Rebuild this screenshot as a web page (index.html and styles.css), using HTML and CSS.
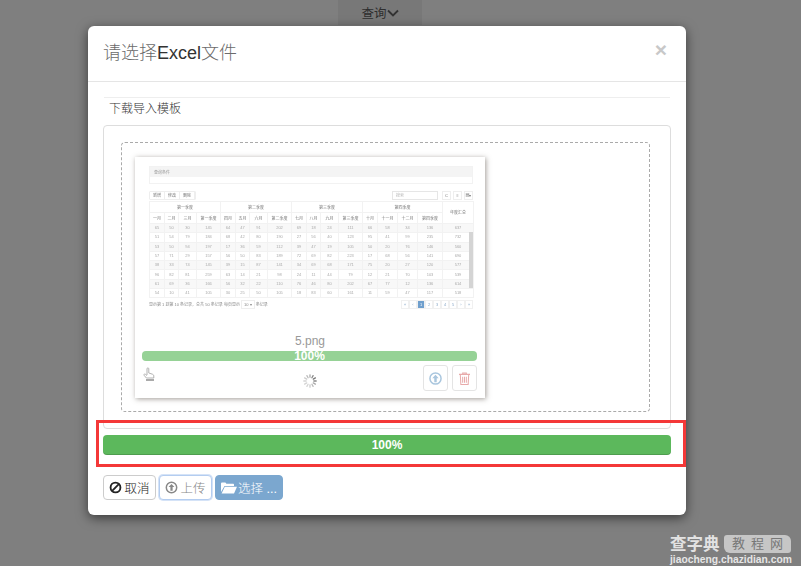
FILE: index.html
```html
<!DOCTYPE html>
<html lang="zh">
<head>
<meta charset="utf-8">
<title>请选择Excel文件</title>
<link rel="stylesheet" href="styles.css">
</head>
<body>
<div class="topbar">
  <div class="query">查询<svg class="chev" viewBox="0 0 12 8" width="12" height="8"><path d="M1 1.5l5 5 5-5" fill="none" stroke="#333" stroke-width="1.8"/></svg></div>
</div>
<div class="modal">
  <header class="modal-head">
    <h4 class="modal-title"><span class="cjk">请选择</span>Excel<span class="cjk">文件</span></h4>
    <span class="close">×</span>
  </header>
  <div class="modal-body">
    <div class="template-row">下载导入模板</div>
    <div class="panel">
      <div class="drop">
        <div class="thumb">
          <div class="shot">
            <div class="cond"><div class="cond-head">查询条件</div></div>
            <div class="toolbar">
              <div class="tool-group"><span>新增</span><span>修改</span><span>删除</span></div>
              <div class="tool-right"><span class="search">搜索</span><span class="tb">C</span><span class="tb">≡</span><span class="tb">▦▾</span></div>
            </div>
            <table class="grid">
              <colgroup><col class="c1"><col class="c2"><col class="c3"><col class="c4"><col class="c1"><col class="c2"><col class="c3"><col class="c4"><col class="c1"><col class="c2"><col class="c3"><col class="c4"><col class="c5"><col class="c6"><col class="c6"><col class="c7"><col class="c8"></colgroup>
              <thead>
                <tr><th colspan="4">第一季度</th><th colspan="4">第二季度</th><th colspan="4">第三季度</th><th colspan="4">第四季度</th><th rowspan="2">年度汇总</th></tr>
                <tr><th>一月</th><th>二月</th><th>三月</th><th>第一季度</th><th>四月</th><th>五月</th><th>六月</th><th>第二季度</th><th>七月</th><th>八月</th><th>九月</th><th>第三季度</th><th>十月</th><th>十一月</th><th>十二月</th><th>第四季度</th></tr>
              </thead>
              <tbody>
                <tr><td>65</td><td>50</td><td>30</td><td>145</td><td>64</td><td>47</td><td>91</td><td>202</td><td>69</td><td>18</td><td>24</td><td>111</td><td>66</td><td>58</td><td>34</td><td>136</td><td>637</td></tr>
                <tr><td>51</td><td>54</td><td>79</td><td>184</td><td>68</td><td>42</td><td>80</td><td>190</td><td>27</td><td>56</td><td>40</td><td>123</td><td>95</td><td>41</td><td>99</td><td>235</td><td>732</td></tr>
                <tr><td>53</td><td>50</td><td>94</td><td>197</td><td>17</td><td>36</td><td>59</td><td>112</td><td>39</td><td>47</td><td>19</td><td>105</td><td>50</td><td>20</td><td>76</td><td>146</td><td>560</td></tr>
                <tr><td>57</td><td>71</td><td>29</td><td>157</td><td>56</td><td>50</td><td>83</td><td>189</td><td>72</td><td>69</td><td>82</td><td>223</td><td>17</td><td>68</td><td>56</td><td>141</td><td>690</td></tr>
                <tr><td>38</td><td>33</td><td>74</td><td>145</td><td>39</td><td>15</td><td>87</td><td>141</td><td>34</td><td>69</td><td>68</td><td>171</td><td>75</td><td>20</td><td>27</td><td>120</td><td>577</td></tr>
                <tr><td>96</td><td>82</td><td>81</td><td>259</td><td>63</td><td>14</td><td>21</td><td>98</td><td>24</td><td>11</td><td>44</td><td>79</td><td>12</td><td>21</td><td>70</td><td>103</td><td>539</td></tr>
                <tr><td>61</td><td>69</td><td>36</td><td>166</td><td>56</td><td>32</td><td>22</td><td>110</td><td>76</td><td>46</td><td>80</td><td>202</td><td>67</td><td>77</td><td>12</td><td>136</td><td>614</td></tr>
                <tr><td>54</td><td>10</td><td>41</td><td>105</td><td>30</td><td>25</td><td>50</td><td>105</td><td>18</td><td>83</td><td>60</td><td>161</td><td>11</td><td>59</td><td>47</td><td>117</td><td>518</td></tr>
              </tbody>
            </table>
            <div class="scrollbar"></div>
            <div class="foot">
              <div class="foot-info">显示第 1 到第 10 条记录，总共 50 条记录 每页显示 <span class="pagesize">10 ▾</span> 条记录</div>
              <div class="pager"><span>«</span><span>‹</span><span class="on">1</span><span>2</span><span>3</span><span>4</span><span>5</span><span>›</span><span>»</span></div>
            </div>
          </div>
          <div class="fname">5.png</div>
          <div class="mini-bar">100%</div>
          <div class="thumb-actions">
            <svg class="hand" viewBox="0 0 12 15" width="12" height="15"><path d="M4 8V1.8a.9.9 0 0 1 1.8 0V6l3.6 1.2c.8.3 1.4.9 1.4 1.6V11H3.4L1 8.2c-.5-.8.6-1.5 1.3-1L4 8.6" fill="none" stroke="#aaa" stroke-width=".9"/><path d="M3 13h8" stroke="#aaa" stroke-width="2"/></svg>
            <svg class="spinner" viewBox="0 0 14 14" width="14" height="14"><g stroke-width="1.3" stroke-linecap="round"><path d="M7 .8v2.4" stroke="#aaa"/><path d="M10.1 1.6l-1.2 2.1" stroke="#888"/><path d="M12.4 3.9l-2.1 1.2" stroke="#777"/><path d="M13.2 7h-2.4" stroke="#888"/><path d="M12.4 10.1l-2.1-1.2" stroke="#aaa"/><path d="M10.1 12.4l-1.2-2.1" stroke="#bbb"/><path d="M7 13.2v-2.4" stroke="#ccc"/><path d="M3.9 12.4l1.2-2.1" stroke="#d4d4d4"/><path d="M1.6 10.1l2.1-1.2" stroke="#d4d4d4"/><path d="M.8 7h2.4" stroke="#d4d4d4"/><path d="M1.6 3.9l2.1 1.2" stroke="#ccc"/><path d="M3.9 1.6l1.2 2.1" stroke="#bbb"/></g></svg>
            <div class="act-btns">
              <span class="act"><svg viewBox="0 0 14 14" width="13" height="13"><circle cx="7" cy="7" r="6" fill="none" stroke="#a9c6de" stroke-width="1.6"/><path d="M7 3l3.4 3.6H8.3V11H5.7V6.6H3.6z" fill="#a9c6de"/></svg></span>
              <span class="act"><svg viewBox="0 0 12 14" width="11" height="13"><path d="M0 2.5h12M4 2.5V1h4v1.5M1.4 2.5l.6 11h8l.6-11M4 5v6.5M6 5v6.5M8 5v6.5" fill="none" stroke="#e8aaaa" stroke-width="1.1"/></svg></span>
            </div>
          </div>
        </div>
      </div>
    </div>
    <div class="progress">100%</div>
    <div class="buttons">
      <button class="btn">
        <svg viewBox="0 0 14 14" width="13" height="13"><circle cx="7" cy="7" r="5.3" fill="none" stroke="#222" stroke-width="2"/><path d="M3.4 10.6l7.2-7.2" stroke="#222" stroke-width="2"/></svg>取消
      </button>
      <button class="btn btn-focus">
        <svg viewBox="0 0 14 14" width="13" height="13"><circle cx="7" cy="7" r="5.6" fill="none" stroke="#888" stroke-width="1.6"/><path d="M7 3.2l3.2 3.3H8.2V10.6H5.8V6.5H3.8z" fill="#888"/></svg>上传
      </button>
      <button class="btn btn-pick">
        <svg viewBox="0 0 16 12" width="16" height="12"><path d="M0 10V1.4C0 .8.4.5 1 .5h3.4l1 1.3H12c.6 0 1 .4 1 1V4H3.5L0 10z" fill="#fff"/><path d="M3.8 4.8H16l-3 6.7H.6z" fill="#fff"/></svg>选择 ...
      </button>
    </div>
    <div class="red-box"></div>
  </div>
</div>
<div class="watermark">
  <div class="wm-top"><span class="wm-name">查字典</span><span class="wm-tag">教程网</span></div>
  <div class="wm-url">jiaocheng.chazidian.com</div>
</div>
</body>
</html>
```

FILE: styles.css
```css
* { box-sizing: border-box; }
html, body { margin: 0; height: 566px; overflow: hidden; }
body {
  background: #7f7f7f;
  position: relative;
  font-family: "Liberation Sans", "Noto Sans CJK SC", sans-serif;
  color: #333;
  font-size: 12px;
}
.topbar { height: 26px; padding-left: 338px; }
.query {
  width: 84px;
  height: 25px;
  background: #787878;
  display: flex;
  align-items: center;
  justify-content: center;
  font-size: 12.5px;
  color: #2e2e2e;
}
.chev { display: block; }
.modal {
  width: 598px;
  height: 489px;
  margin-left: 88px;
  background: #fff;
  border-radius: 6px;
  box-shadow: 0 3px 12px rgba(0, 0, 0, .55);
}
.modal-head {
  height: 56px;
  border-bottom: 1px solid #e5e5e5;
  padding: 15px 16px 0;
  display: flex;
  justify-content: space-between;
}
.modal-title { margin: 0 0 0 -1px; font-size: 18px; font-weight: 400; line-height: 24px; color: #333; }
.cjk { font-weight: 300; color: #6b6b6b; }
.close { font-size: 21px; font-weight: 700; line-height: 18px; color: #c8c8c8; margin-right: 3px; }
.modal-body { position: relative; padding: 15px 15px 0; }
.template-row {
  height: 28px;
  margin: 0 1px;
  padding: 3px 5px 0;
  border-top: 1px solid #eee;
  font-size: 12px;
  font-weight: 300;
  line-height: 17px;
  color: #333;
}
.panel {
  height: 304px;
  border: 1px solid #ddd;
  border-radius: 4px;
  padding: 16px 20px 0 17px;
}
.drop {
  height: 270px;
  border: 1px dashed #aaa;
  border-radius: 4px;
  padding: 14px 13px;
}
.thumb {
  width: 350px;
  height: 241px;
  background: #fff;
  box-shadow: 1px 1px 5px rgba(70, 60, 50, .5);
}
.shot {
  position: relative;
  height: 175px;
  padding: 9px 12px 0 14px;
  filter: blur(.5px);
  color: #999;
  font-size: 4px;
  line-height: 5px;
}
.cond { height: 18px; border: 1px solid #f2f2f2; }
.cond-head { height: 10px; background: #f4f4f4; padding: 3px 0 0 4px; }
.toolbar { display: flex; justify-content: space-between; margin-top: 7px; height: 9px; }
.tool-group { display: flex; border: 1px solid #eee; border-radius: 1px; }
.tool-group span { padding: 1px 3px; border-right: 1px solid #eee; color: #777; }
.tool-right { display: flex; gap: 2px; }
.search { width: 46px; border: 1px solid #e6e6e6; padding: 1px 3px; color: #bbb; margin-right: 2px; }
.tb { width: 9px; border: 1px solid #eee; text-align: center; color: #777; line-height: 7px; }
.grid {
  table-layout: fixed;
  width: 324px;
  margin-top: 1px;
  border-collapse: collapse;
}
.c1 { width: 15px; }
.c2 { width: 14px; }
.c3 { width: 18px; }
.c4 { width: 24px; }
.c5 { width: 15px; }
.c6 { width: 20px; }
.c7 { width: 25px; }
.c8 { width: 31px; }
.grid th, .grid td {
  border: 1px solid #f2f2f2;
  padding: 0;
  text-align: center;
  font-weight: 400;
  overflow: hidden;
  white-space: nowrap;
}
.grid th { height: 11px; color: #777; }
.grid td { height: 9.3px; line-height: 6px; color: #aaa; }
.grid tbody tr:nth-child(odd) td { background: #f8f8f8; }
.scrollbar {
  position: absolute;
  left: 334px;
  top: 75px;
  width: 4px;
  height: 56px;
  background: #d4d4d4;
}
.foot { display: flex; justify-content: space-between; margin-top: 2px; height: 10px; }
.foot-info { padding-top: 2px; white-space: nowrap; color: #888; }
.pagesize { border: 1px solid #eee; padding: 1px 2px; }
.pager { display: flex; }
.pager span {
  width: 8px;
  height: 9px;
  border: 1px solid #f0f0f0;
  text-align: center;
  color: #8aa9c9;
  line-height: 7px;
}
.pager .on { background: #6f9fcd; color: #fff; }
.fname { height: 19px; text-align: center; font-size: 12px; line-height: 19px; color: #999; }
.mini-bar {
  height: 10px;
  margin: 0 8px 0 7px;
  background: #96d296;
  border-radius: 4px;
  text-align: center;
  font-size: 12px;
  font-weight: 700;
  line-height: 10px;
  color: #fff;
}
.thumb-actions { position: relative; display: flex; justify-content: space-between; padding: 4px 8px 0 7px; }
.hand { margin: 2px 0 0 1px; }
.spinner { position: absolute; left: 168px; top: 13px; }
.act-btns { display: flex; gap: 4px; }
.act {
  width: 25px;
  height: 26px;
  border: 1px solid #e4e4e4;
  border-radius: 3px;
  display: flex;
  align-items: center;
  justify-content: center;
}
.progress {
  height: 20px;
  margin-top: 6px;
  background: #5cb85c;
  border-radius: 4px;
  box-shadow: inset 0 -1px 0 rgba(0, 0, 0, .15);
  color: #fff;
  font-size: 12px;
  font-weight: 700;
  line-height: 20px;
  text-align: center;
}
.buttons { display: flex; gap: 3px; margin-top: 20px; }
.btn {
  height: 25px;
  width: 53px;
  padding: 0;
  border: 1px solid #ccc;
  border-radius: 4px;
  background: #fff;
  display: flex;
  align-items: center;
  justify-content: center;
  gap: 2px;
  font: 300 12.5px "Liberation Sans", "Noto Sans CJK SC", sans-serif;
  color: #222;
}
.btn-focus { border-color: #b4cdf0; box-shadow: 0 0 0 1px #d5e3f7; color: #888; }
.btn-pick { width: 68px; border-color: #7ba7cf; background: #7ba7cf; color: #fff; gap: 1px; }
.red-box {
  position: absolute;
  left: 8px;
  top: 338px;
  width: 590px;
  height: 47px;
  border: 3px solid #f43838;
}
.watermark { position: absolute; left: 670px; top: 534px; width: 121px; }
.wm-top { display: flex; justify-content: space-between; align-items: center; height: 20px; }
.wm-name { font-size: 16.5px; font-weight: 700; color: #e2e2e2; line-height: 20px; }
.wm-tag {
  width: 67px;
  height: 18px;
  background: #c6c6c6;
  border-radius: 3px 6px 3px 6px;
  color: #777;
  font-size: 13px;
  line-height: 18px;
  text-align: center;
  letter-spacing: 6px;
  padding-left: 6px;
}
.wm-url { font-size: 10.3px; font-weight: 700; color: #e6e6e6; line-height: 11px; white-space: nowrap; }
```
